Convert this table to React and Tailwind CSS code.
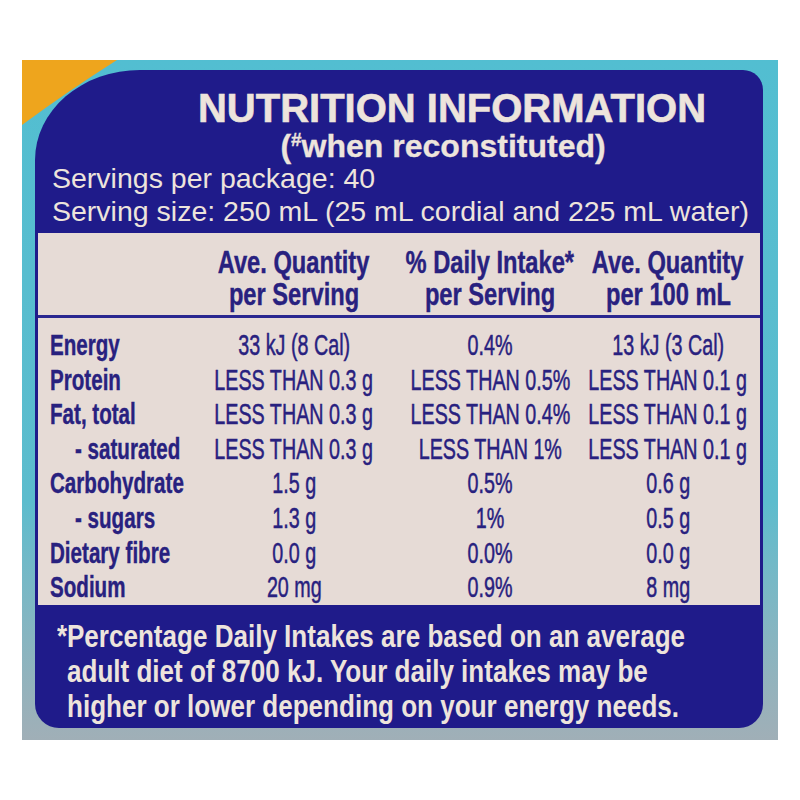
const rows = [
  ["Energy", "33 kJ (8 Cal)", "0.4%", "13 kJ (3 Cal)", false],
  ["Protein", "LESS THAN 0.3 g", "LESS THAN 0.5%", "LESS THAN 0.1 g", false],
  ["Fat, total", "LESS THAN 0.3 g", "LESS THAN 0.4%", "LESS THAN 0.1 g", false],
  ["- saturated", "LESS THAN 0.3 g", "LESS THAN 1%", "LESS THAN 0.1 g", true],
  ["Carbohydrate", "1.5 g", "0.5%", "0.6 g", false],
  ["- sugars", "1.3 g", "1%", "0.5 g", true],
  ["Dietary fibre", "0.0 g", "0.0%", "0.0 g", false],
  ["Sodium", "20 mg", "0.9%", "8 mg", false],
];

const headers = [
  ["Ave. Quantity", "per Serving"],
  ["% Daily Intake*", "per Serving"],
  ["Ave. Quantity", "per 100 mL"],
];

const cols = "grid grid-cols-[162px_188px_204px_152px]";

function HeadCell({ lines }) {
  return (
    <div className="flex flex-col items-center min-w-0">
      {lines.map((l) => (
        <span
          key={l}
          className="block whitespace-nowrap scale-x-[0.74] origin-center text-[32px] leading-[32px] font-bold [-webkit-text-stroke:0.4px_#28217f]"
        >
          {l}
        </span>
      ))}
    </div>
  );
}

function ValueCell({ text }) {
  return (
    <div className="flex justify-center min-w-0">
      <span className="block whitespace-nowrap scale-x-[0.68] origin-center [-webkit-text-stroke:0.5px_#28217f]">
        {text}
      </span>
    </div>
  );
}

export default function App() {
  return (
    <div className="w-[800px] h-[800px] bg-white pt-[60px] pl-[22px] font-['Liberation_Sans',Arial,sans-serif]">
      <div className="relative w-[756px] h-[680px] bg-linear-to-b from-[#52bed1] via-[#5cbccd] via-65% to-[#a0afb7] pt-[10px] pl-[13px] pr-[15px] pb-[12px]">
        <svg className="absolute left-0 top-0" width="100" height="70" viewBox="0 0 100 70">
          <path d="M0 0H95Q46 31 0 65Z" fill="#eea51d" />
        </svg>
        <div className="relative flex flex-col h-full bg-[#1f1b8a] rounded-tl-[105px_90px] rounded-tr-[20px] rounded-b-[24px] px-[3px] overflow-hidden text-[#ede4dc]">
          {/* Title */}
          <div className="flex flex-col items-center pl-[94px] pt-[18px] font-bold">
            <h1 className="ml-[12px] text-[40px] leading-[40px] font-bold [-webkit-text-stroke:0.6px_#ede4dc]">
              NUTRITION INFORMATION
            </h1>
            <p className="mr-[6px] mt-[2px] text-[32px] leading-[32px] [-webkit-text-stroke:0.3px_#ede4dc]">
              (<span className="align-top text-[19px] leading-[19px]">#</span>when reconstituted)
            </p>
          </div>
          {/* Servings */}
          <div className="pl-[14px] text-[28.5px] leading-[33px]">
            <p>Servings per package: 40</p>
            <p>Serving size: 250 mL (25 mL cordial and 225 mL water)</p>
          </div>
          {/* Table */}
          <div className="mt-[5px] bg-[#e6dbd6] text-[#28217f]">
            <div className={`${cols} pt-[13px] pb-[5px] border-b-[3px] border-[#2a2790]`}>
              <div />
              {headers.map((h, i) => (
                <HeadCell key={i} lines={h} />
              ))}
            </div>
            <div className="pt-[10px] text-[29px] leading-[34.6px]">
              {rows.map(([label, a, b, c, indent]) => (
                <div key={label} className={cols}>
                  <div className={`flex min-w-0 ${indent ? "pl-[37px]" : "pl-[12px]"}`}>
                    <span className="block whitespace-nowrap scale-x-[0.71] origin-left font-bold [-webkit-text-stroke:0.4px_#28217f]">
                      {label}
                    </span>
                  </div>
                  <ValueCell text={a} />
                  <ValueCell text={b} />
                  <ValueCell text={c} />
                </div>
              ))}
            </div>
          </div>
          {/* Footnote */}
          <div className="flex pl-[19px] pt-[14px] text-[31px] leading-[35px] font-bold">
            <span className="w-[10px] shrink-0 scale-x-[0.84] origin-left">*</span>
            <p className="whitespace-nowrap scale-x-[0.84] origin-left">
              Percentage Daily Intakes are based on an average
              <br />
              adult diet of 8700 kJ. Your daily intakes may be
              <br />
              higher or lower depending on your energy needs.
            </p>
          </div>
        </div>
      </div>
    </div>
  );
}
